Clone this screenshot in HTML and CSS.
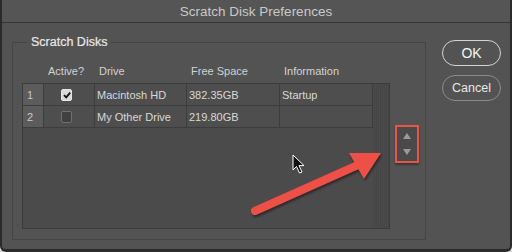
FILE: index.html
```html
<!DOCTYPE html>
<html lang="en">
<head>
  <meta charset="UTF-8">
  <title>Scratch Disk Preferences</title>
  <link rel="stylesheet" href="styles.css">
</head>
<body>

<div class="dialog">
  <div class="titlebar">Scratch Disk Preferences</div>

  <div class="dialog-body">
    <fieldset class="group">
      <legend>Scratch Disks</legend>

      <!-- Column headings sit above the list box -->
      <div class="list-head">
        <span></span>
        <span>Active?</span>
        <span>Drive</span>
        <span>Free Space</span>
        <span>Information</span>
      </div>

      <div class="list-row">
        <div class="list-box">
          <div class="rows">
            <div class="row">
              <div class="cell num">1</div>
              <div class="cell check"><span class="checkbox on"><svg viewBox="0 0 10 10" width="10" height="10"><path d="M2 5.2 L4.2 7.4 L8.2 2.6" fill="none" stroke="#111" stroke-width="1.8"/></svg></span></div>
              <div class="cell">Macintosh HD</div>
              <div class="cell">382.35GB</div>
              <div class="cell">Startup</div>
            </div>
            <div class="row">
              <div class="cell num">2</div>
              <div class="cell check"><span class="checkbox"></span></div>
              <div class="cell">My Other Drive</div>
              <div class="cell">219.80GB</div>
              <div class="cell"></div>
            </div>
          </div>
          <div class="scrollbar"></div>
        </div>

        <!-- Move up / move down buttons, outlined for the callout -->
        <div class="order-buttons">
          <span class="tri up"></span>
          <span class="tri down"></span>
        </div>
      </div>
    </fieldset>

    <div class="actions">
      <button class="btn primary">OK</button>
      <button class="btn">Cancel</button>
    </div>
  </div>

  <!-- Annotation: red arrow and mouse pointer drawn over the dialog -->
  <svg class="callout" width="512" height="252" viewBox="0 0 512 252">
    <g class="arrow">
      <line x1="255" y1="211" x2="358" y2="165" stroke="#ef5046" stroke-width="8" stroke-linecap="round"/>
      <polygon points="349,153 381,153 364,179" fill="#ef5046"/>
    </g>
    <path d="M293 155 L293 170 L296.5 166.5 L299.5 173 L302 172 L299 165.6 L304 165.6 Z" fill="#111" stroke="#fff" stroke-width="1" stroke-linejoin="round"/>
  </svg>
</div>

</body>
</html>
```

FILE: styles.css
```css
/* Reset */
html, body {
  margin: 0;
  padding: 0;
  background: #d9d9d9;
}

.dialog {
  position: relative;
  width: 512px;
  height: 252px;
  box-sizing: border-box;
  background: #535353;
  border: 2px solid #2a2a2a;
  border-top: 0;
  border-bottom-width: 3px;
  border-radius: 0 0 6px 6px;
  font-family: "Liberation Sans", Arial, sans-serif;
  color: #d8d8d8;
  overflow: hidden;
}

/* Title bar */
.titlebar {
  height: 22px;
  line-height: 23px;
  text-align: center;
  font-size: 13.5px;
  color: #c9c9c9;
  background: #555555;
  border-bottom: 1px solid #343434;
}

.dialog-body {
  display: flex;
  align-items: flex-start;
}

/* Group box */
.group {
  margin: 12px 0 0 10px;
  padding: 0 6px 10px 9px;
  width: 414px;
  box-sizing: border-box;
  border: 1px solid #454545;
  min-width: 0;
}

.group legend {
  margin-left: 5px;
  padding: 0 4px;
  font-size: 12.5px;
  line-height: 14px;
  color: #e8e8e8;
  -webkit-text-stroke: 0.2px #e8e8e8;
}

.list-head {
  display: grid;
  grid-template-columns: 22px 51px 92px 93px 93px;
  padding-top: 15px;
  margin-bottom: 5px;
  font-size: 11px;
  line-height: 14px;
  color: #d2d2d2;
}

.list-head span {
  padding-left: 4px;
}

.list-row {
  display: flex;
  align-items: flex-start;
  gap: 5px;
}

/* The list box */
.list-box {
  display: flex;
  width: 368px;
  height: 146px;
  box-sizing: border-box;
  background: #4b4b4b;
  border: 1px solid #3b3b3b;
}

.rows {
  width: 350px;
}

.row {
  display: grid;
  grid-template-columns: 21px 51px 92px 93px 93px;
  height: 22px;
}

.cell {
  display: flex;
  align-items: center;
  padding-left: 2px;
  font-size: 11px;
  color: #d8d8d8;
  background: #4e4e4e;
  border-right: 1px solid #3d3d3d;
  border-bottom: 1px solid #3d3d3d;
  white-space: nowrap;
}

.cell.num {
  padding-left: 4px;
  background: #5c5c5c;
  color: #c8c8c8;
}

.cell.check {
  padding-left: 17px;
}

.checkbox {
  display: block;
  width: 9px;
  height: 10px;
  background: #404040;
  border: 1px solid #707070;
  border-radius: 2px;
}

.checkbox.on {
  background: #d9d9d9;
  border-color: #e6e6e6;
}

.checkbox svg {
  display: block;
}

.scrollbar {
  flex: 1;
  background: #484848;
  background-image: repeating-linear-gradient(90deg, #4a4a4a 0 1px, #464646 1px 2px);
}

/* Move up / down, outlined in red */
.order-buttons {
  margin-top: 42px;
  width: 24px;
  height: 38px;
  box-sizing: border-box;
  border: 2px solid #e8544a;
  background: #4a4a4a;
  box-shadow: 0 2px 2px rgba(0, 0, 0, 0.35);
  display: flex;
  flex-direction: column;
  align-items: center;
  justify-content: center;
  gap: 10px;
}

.tri {
  width: 0;
  height: 0;
  border-left: 4px solid transparent;
  border-right: 4px solid transparent;
}

.tri.up {
  border-bottom: 6px solid #9a9a9a;
}

.tri.down {
  border-top: 6px solid #9a9a9a;
}

/* OK / Cancel */
.actions {
  display: flex;
  flex-direction: column;
  gap: 9px;
  margin: 17px 0 0 16px;
}

.btn {
  width: 59px;
  height: 26px;
  padding: 0;
  border-radius: 13px;
  background: #535353;
  border: 1px solid #8c8c8c;
  color: #e8e8e8;
  font-family: "Liberation Sans", Arial, sans-serif;
  font-size: 12.5px;
}

.btn.primary {
  border-color: #d4d4d4;
  color: #f4f4f4;
  font-size: 14px;
}

/* Annotation overlay */
.callout {
  position: absolute;
  left: -2px;
  top: 0;
  pointer-events: none;
}

.callout .arrow {
  filter: drop-shadow(1px 2px 1px rgba(0, 0, 0, 0.45));
}
```
